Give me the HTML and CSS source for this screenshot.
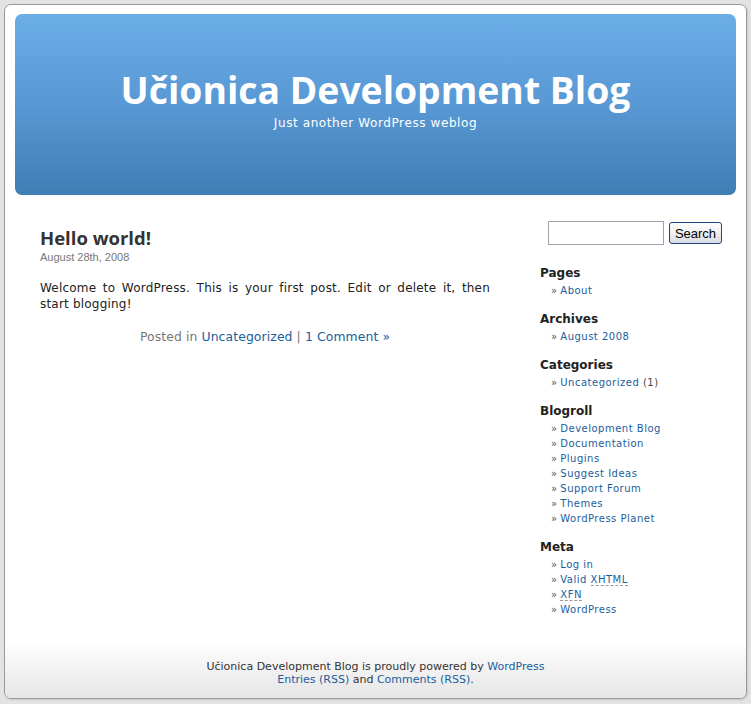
FILE: index.html
```html
<!DOCTYPE html>
<html lang="hr">
<head>
<meta charset="utf-8">
<title>Učionica Development Blog</title>
<link rel="stylesheet" href="styles.css">
</head>
<body>
<div class="page">
  <header class="masthead">
    <h1 class="site-title"><a href="#">Učionica Development Blog</a></h1>
    <div class="tagline">Just another WordPress weblog</div>
  </header>

  <div class="main">
    <div class="content">
      <article class="post">
        <h2 class="post-title"><a href="#">Hello world!</a></h2>
        <small class="post-date">August 28th, 2008</small>
        <div class="entry">
          <p>Welcome to WordPress. This is your first post. Edit or delete it, then start blogging!</p>
        </div>
        <p class="postmeta">Posted in <a href="#">Uncategorized</a> | <a href="#">1 Comment »</a></p>
      </article>
    </div>

    <aside class="sidebar">
      <form class="searchform">
        <input class="search-field" type="text">
        <button class="search-btn" type="button">Search</button>
      </form>

      <section class="widget">
        <h2>Pages</h2>
        <ul>
          <li><a href="#">About</a></li>
        </ul>
      </section>

      <section class="widget">
        <h2>Archives</h2>
        <ul>
          <li><a href="#">August 2008</a></li>
        </ul>
      </section>

      <section class="widget">
        <h2>Categories</h2>
        <ul>
          <li><a href="#">Uncategorized</a> (1)</li>
        </ul>
      </section>

      <section class="widget">
        <h2>Blogroll</h2>
        <ul>
          <li><a href="#">Development Blog</a></li>
          <li><a href="#">Documentation</a></li>
          <li><a href="#">Plugins</a></li>
          <li><a href="#">Suggest Ideas</a></li>
          <li><a href="#">Support Forum</a></li>
          <li><a href="#">Themes</a></li>
          <li><a href="#">WordPress Planet</a></li>
        </ul>
      </section>

      <section class="widget">
        <h2>Meta</h2>
        <ul>
          <li><a href="#">Log in</a></li>
          <li><a href="#">Valid <abbr title="eXtensible HyperText Markup Language">XHTML</abbr></a></li>
          <li><a href="#"><abbr title="XHTML Friends Network">XFN</abbr></a></li>
          <li><a href="#">WordPress</a></li>
        </ul>
      </section>
    </aside>
  </div>

  <footer class="site-footer">
    <p>Učionica Development Blog is proudly powered by <a href="#">WordPress</a><br>
    <a href="#">Entries (RSS)</a> and <a href="#">Comments (RSS)</a>.</p>
  </footer>
</div>
</body>
</html>
```

FILE: styles.css
```css
html, body {
  margin: 0;
  padding: 0;
}

body {
  background: #e3e3e3;
  font-family: "DejaVu Sans", Verdana, sans-serif;
  color: #333;
  padding: 4px;
}

a {
  color: #1a5e9c;
  text-decoration: none;
}

/* outer white sheet */
.page {
  box-sizing: border-box;
  width: 743px;
  height: 695px;
  margin: 0 auto;
  background: #fff;
  border: 1px solid #9a9a9a;
  border-radius: 7px;
  box-shadow: 1px 1px 2px rgba(0, 0, 0, 0.12);
  display: flex;
  flex-direction: column;
  overflow: hidden;
}

/* blue header */
.masthead {
  margin: 9px 10px 0;
  height: 181px;
  box-sizing: border-box;
  padding-top: 56px;
  border-radius: 7px;
  background: linear-gradient(to bottom, #6aaee8 0%, #5898d4 50%, #3f7db5 100%);
  text-align: center;
}

.site-title {
  margin: 0;
  font-family: "Open Sans", "DejaVu Sans", sans-serif;
  font-weight: 700;
  font-size: 37.3px;
  line-height: 40px;
}

.site-title a {
  color: #fff;
}

.tagline {
  margin-top: 5px;
  font-size: 12px;
  line-height: 16px;
  letter-spacing: 0.6px;
  color: #fff;
}

/* two columns */
.main {
  flex: 1;
  display: flex;
  padding-top: 26px;
}

.content {
  width: 450px;
  margin-left: 35px;
  padding-top: 6px;
}

.post-title {
  margin: 0;
  font-family: "Open Sans", "DejaVu Sans", sans-serif;
  font-weight: 700;
  font-size: 18.5px;
  line-height: 22px;
}

.post-title a {
  color: #333;
}

.post-date {
  display: block;
  margin-top: 1px;
  font-family: "Liberation Sans", Arial, sans-serif;
  font-size: 11px;
  line-height: 14px;
  color: #777;
}

.entry p {
  margin: 16px 0 0;
  font-size: 12px;
  line-height: 16px;
  letter-spacing: 0.2px;
  color: #222;
  text-align: justify;
}

.postmeta {
  margin: 17px 0 0;
  font-size: 12.4px;
  line-height: 16px;
  letter-spacing: 0.1px;
  color: #777;
  text-align: center;
}

/* sidebar */
.sidebar {
  margin-left: 50px;
  width: 190px;
}

.searchform {
  display: flex;
  align-items: center;
  margin: 0 0 21px 8px;
}

.search-field {
  box-sizing: border-box;
  width: 116px;
  height: 24px;
  margin: 0;
  border: 1px solid #9ba3ab;
  background: #fff;
}

.search-btn {
  box-sizing: border-box;
  width: 53px;
  height: 22px;
  margin-left: 5px;
  padding: 0;
  border: 1px solid #1e4577;
  border-radius: 3px;
  background: linear-gradient(to bottom, #ffffff 0%, #f2f2f0 45%, #d9dce6 100%);
  font-family: "Liberation Sans", Arial, sans-serif;
  font-size: 13px;
  color: #000;
}

.widget {
  margin-bottom: 14px;
}

.widget h2 {
  margin: 0 0 2px;
  font-size: 12px;
  line-height: 15px;
  font-weight: 700;
  color: #222;
}

.widget ul {
  list-style: none;
  margin: 0;
  padding: 0 0 0 11px;
}

.widget li {
  font-size: 10px;
  line-height: 15px;
  letter-spacing: 0.5px;
  color: #444;
}

.widget li::before {
  content: "\00BB\00A0";
  letter-spacing: 0;
  color: #555;
}

abbr {
  text-decoration: none;
  border-bottom: 1px dashed #999;
}

/* footer band */
.site-footer {
  height: 57px;
  box-sizing: border-box;
  padding-top: 19px;
  background: linear-gradient(to bottom, #ffffff 0%, #f3f3f3 45%, #e6e6e6 100%);
  text-align: center;
}

.site-footer p {
  margin: 0;
  font-size: 11px;
  line-height: 13px;
  color: #333;
}
```
